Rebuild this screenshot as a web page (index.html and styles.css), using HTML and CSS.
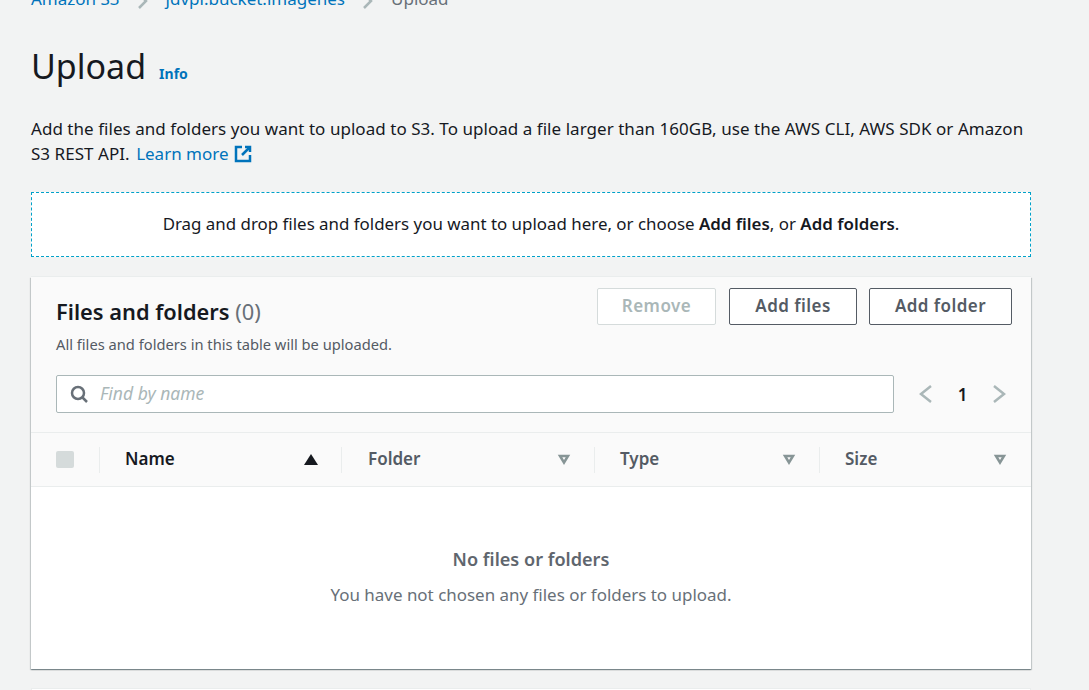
FILE: index.html
```html
<!DOCTYPE html>
<html lang="en">
<head>
<meta charset="utf-8">
<title>Upload</title>
<link rel="stylesheet" href="styles.css">
</head>
<body>
<main class="page">
  <nav class="crumbs">
    <a class="link">Amazon S3</a>
    <svg class="crumb-sep" width="16" height="16" viewBox="0 0 16 16"><path d="M4 15 L11 8 L4 1"/></svg>
    <a class="link">jdvpl.bucket.imagenes</a>
    <svg class="crumb-sep" width="16" height="16" viewBox="0 0 16 16"><path d="M4 15 L11 8 L4 1"/></svg>
    <span class="crumb-current">Upload</span>
  </nav>
  <header class="title-row">
    <h1>Upload</h1>
    <a class="info">Info</a>
  </header>
  <p class="intro">Add the files and folders you want to upload to S3. To upload a file larger than 160GB, use the AWS CLI, AWS SDK or Amazon S3 REST API. <a class="link learn">Learn more</a>
    <svg class="ext" width="18" height="18" viewBox="0 0 18 18"><path d="M8 2H2v14h14v-6"/><path d="M11 2h5v5"/><path d="M16 2L8 10"/></svg></p>
  <div class="dropzone"><span>Drag and drop files and folders you want to upload here, or choose <b>Add files</b>, or <b>Add folders</b>.</span></div>
  <section class="card">
    <div class="card-head">
      <div class="head-top">
        <div>
          <h2>Files and folders <span class="count">(0)</span></h2>
          <p class="desc">All files and folders in this table will be uploaded.</p>
        </div>
        <div class="actions">
          <button class="btn btn-remove">Remove</button>
          <button class="btn btn-files">Add files</button>
          <button class="btn btn-folder">Add folder</button>
        </div>
      </div>
      <div class="tools">
        <div class="search">
          <svg class="search-icon" width="18" height="18" viewBox="0 0 18 18"><circle cx="8" cy="8" r="6"/><path d="M12.5 12.5L17 17"/></svg>
          <span class="placeholder">Find by name</span>
        </div>
        <div class="pager">
          <svg width="14" height="20" viewBox="0 0 14 20"><path d="M12 2L2 10l10 8"/></svg>
          <span class="page-num">1</span>
          <svg width="14" height="20" viewBox="0 0 14 20"><path d="M2 2l10 8-10 8"/></svg>
        </div>
      </div>
    </div>
    <div class="thead">
      <div class="th th-check"><span class="checkbox"></span></div>
      <div class="th th-name"><span class="th-label dark">Name</span><svg width="14" height="11" viewBox="0 0 14 11"><path class="sorted" d="M7 0l7 11H0z"/></svg></div>
      <div class="th th-folder"><span class="th-label">Folder</span><svg width="14" height="11" viewBox="0 0 14 11"><path class="unsorted" d="M3 2h8L7 8.5z"/></svg></div>
      <div class="th th-type"><span class="th-label">Type</span><svg width="14" height="11" viewBox="0 0 14 11"><path class="unsorted" d="M3 2h8L7 8.5z"/></svg></div>
      <div class="th th-size"><span class="th-label">Size</span><svg width="14" height="11" viewBox="0 0 14 11"><path class="unsorted" d="M3 2h8L7 8.5z"/></svg></div>
    </div>
    <div class="empty">
      <strong>No files or folders</strong>
      <span>You have not chosen any files or folders to upload.</span>
    </div>
  </section>
  <div class="next-card"></div>
</main>
</body>
</html>
```
FILE: styles.css
```css
* { box-sizing: border-box; }
html, body { margin: 0; height: 100%; overflow: hidden; }
body { background: #f2f3f3; color: #16191f; font-family: "Noto Sans", sans-serif; font-size: 17px; }
.page { width: 1000px; margin-left: 31px; margin-top: -11px; }
.link, .info { color: #0073bb; }
.crumbs { display: flex; align-items: center; height: 20px; line-height: 20px; }
.crumb-sep { margin: 3px 15px 0 15px; fill: none; stroke: #aab7b8; stroke-width: 2.5; }
.crumb-current { color: #687078; }
.title-row { display: flex; align-items: baseline; margin-top: 35px; height: 44px; }
h1 { margin: 0; font-size: 34px; font-weight: 400; line-height: 44px; }
.info { margin-left: 13px; font-size: 14px; font-weight: 700; }
.intro { margin: 28px 0 0; line-height: 25px; width: 1000px; letter-spacing: .04px; }
.learn { margin-left: 2px; letter-spacing: 0; }
.ext { vertical-align: -3px; margin-left: 1px; fill: none; stroke: #0073bb; stroke-width: 2.5; }
.dropzone { margin-top: 26px; height: 65px; padding-bottom: 2px; border: 1px dashed #00a1c9; background: #fff; display: flex; align-items: center; justify-content: center; font-size: 16.9px; }
.dropzone b { font-weight: 600; }
.card { margin-top: 20px; background: #fff; height: 392px; box-shadow: 0 1px 1px 0 rgba(0,28,36,.3), 1px 1px 1px 0 rgba(0,28,36,.15), -1px 1px 1px 0 rgba(0,28,36,.15), 0 -1px 0 0 #eaeded; }
.card-head { background: #fafafa; padding: 11px 19px 0 25px; height: 156px; border-bottom: 1px solid #eaeded; }
.head-top { display: flex; justify-content: space-between; }
h2 { margin: 10px 0 0; font-size: 21.8px; line-height: 28px; font-weight: 600; }
.count { font-weight: 400; color: #687078; }
.desc { margin: 9px 0 0; font-size: 14.7px; line-height: 18px; color: #545b64; }
.actions { display: flex; gap: 12px; }
.btn { height: 37px; background: #fff; border: 1px solid #545b64; border-radius: 2px; color: #545b64; font: 600 17px "Noto Sans", sans-serif; letter-spacing: .45px; padding: 0 0 2px; }
.btn-remove { width: 119px; border-color: #d5dbdb; color: #aab7b8; margin-right: 1px; }
.btn-files { width: 128px; }
.btn-folder { width: 143px; }
.tools { display: flex; align-items: center; margin-top: 22px; }
.search { width: 838px; height: 38px; background: #fff; border: 1px solid #aab7b8; border-radius: 2px; display: flex; align-items: center; padding-left: 13px; }
.search-icon { fill: none; stroke: #687078; stroke-width: 2.5; }
.placeholder { margin: 0 0 2px 12px; color: #aab7b8; font-style: italic; font-size: 17.5px; }
.pager { display: flex; align-items: center; margin-left: 25px; }
.pager svg { fill: none; stroke: #aab7b8; stroke-width: 2.5; }
.page-num { width: 59px; text-align: center; font-weight: 600; }
.thead { display: flex; height: 54px; background: #fafafa; border-bottom: 1px solid #eaeded; align-items: center; }
.th { height: 26px; display: flex; align-items: center; justify-content: space-between; border-right: 1px solid #eaeded; font-weight: 600; color: #545b64; padding: 0 23px 0 26px; }
.th:last-child { border-right: 0; }
.th-label { margin-bottom: 2px; }
.th-check { width: 69px; padding-left: 25px; }
.th-name { width: 242px; padding: 0 23px 0 25px; }
.th-folder { width: 253px; }
.th-type { width: 225px; padding-left: 25px; }
.th-size { width: 211px; padding-left: 25px; padding-right: 24px; }
.dark { color: #16191f; }
.checkbox { width: 18px; height: 17px; border-radius: 2px; background: #d5dbdb; }
.sorted { fill: #16191f; }
.unsorted { fill: none; stroke: #879596; stroke-width: 2.5; }
.empty { display: flex; flex-direction: column; align-items: center; padding-top: 60px; color: #687078; }
.empty strong { font-size: 18.1px; font-weight: 600; line-height: 24px; color: #5f666e; }
.empty span { margin-top: 12px; line-height: 24px; font-size: 16.95px; }
.next-card { margin-top: 19px; height: 20px; background: #fff; border: 1px solid #eaeded; }
```
